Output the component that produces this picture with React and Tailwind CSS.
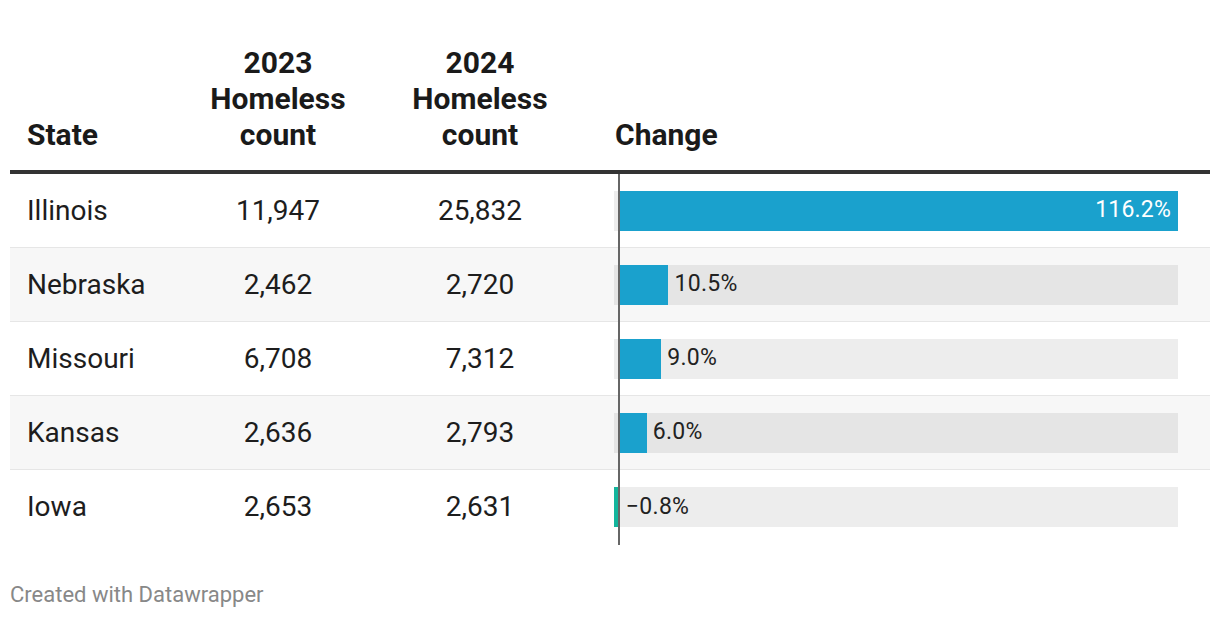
import React from "react";

const ROWS = [
  { state: "Illinois", y2023: "11,947", y2024: "25,832", change: 116.2 },
  { state: "Nebraska", y2023: "2,462", y2024: "2,720", change: 10.5 },
  { state: "Missouri", y2023: "6,708", y2024: "7,312", change: 9.0 },
  { state: "Kansas", y2023: "2,636", y2024: "2,793", change: 6.0 },
  { state: "Iowa", y2023: "2,653", y2024: "2,631", change: -0.8 },
];

// bar scale: domain [-0.8, 116.2] over a 564px track
const MIN = -0.8;
const MAX = 116.2;
const TRACK = 564;
const px = (v) => ((v - MIN) / (MAX - MIN)) * TRACK;
const ZERO = px(0);

const fmt = (v) => (v < 0 ? "\u2212" + Math.abs(v).toFixed(1) : v.toFixed(1)) + "%";

const Bar = ({ value }) => {
  const start = Math.min(px(value), ZERO);
  const width = Math.abs(px(value) - ZERO);
  const inside = value > 100;
  const labelLeft = Math.max(px(value), ZERO + 2) + 6;
  return (
    <div className="relative h-[40px] bg-black/[0.07]">
      <div
        className={`absolute top-0 h-full ${value < 0 ? "bg-[#13b59c]" : "bg-[#1aa1cd]"}`}
        style={{ left: start, width }}
      />
      {inside ? (
        <span className="absolute right-[7px] top-0 h-full flex items-center text-[23px] tracking-[0.2px] text-white">
          {fmt(value)}
        </span>
      ) : (
        <span
          className="absolute top-0 h-full flex items-center text-[23px] tracking-[0.3px] text-[#222]"
          style={{ left: labelLeft }}
        >
          {fmt(value)}
        </span>
      )}
    </div>
  );
};

export default function App() {
  return (
    <div className="w-[1220px] h-[618px] bg-white font-['Roboto',sans-serif] overflow-hidden">
      <div className="mx-[10px]">
        {/* Header */}
        <div className="grid grid-cols-[167px_202px_202px_1fr] items-end pt-[45px] pb-[17px] border-b-4 border-[#333] text-[30px] leading-[36px] font-bold text-[#1a1a1a]">
          <div className="pl-[17px]">State</div>
          <div className="text-center">
            2023
            <br />
            Homeless
            <br />
            count
          </div>
          <div className="text-center">
            2024
            <br />
            Homeless
            <br />
            count
          </div>
          <div className="pl-[34px]">Change</div>
        </div>

        {/* Rows */}
        {ROWS.map((row, i) => (
          <div
            key={row.state}
            className={`grid grid-cols-[167px_202px_202px_1fr] items-center h-[74px] text-[28px] text-[#1d1d1d] ${
              i % 2 === 1 ? "bg-[#f7f7f7]" : "bg-white"
            } ${i < ROWS.length - 1 ? "border-b border-[#e6e6e6]" : ""}`}
          >
            <div className="pl-[17px]">{row.state}</div>
            <div className="text-center">{row.y2023}</div>
            <div className="text-center">{row.y2024}</div>
            <div className="relative h-full flex items-center pl-[33px] pr-[32px]">
              <div className="w-full">
                <Bar value={row.change} />
              </div>
              {/* zero axis */}
              <div
                className="absolute top-0 -bottom-px w-[2px] bg-[#666]"
                style={{ left: 33 + ZERO }}
              />
            </div>
          </div>
        ))}
      </div>

      {/* Footer */}
      <div className="mt-[34px] pl-[10px] text-[22px] text-[#888]">Created with Datawrapper</div>
    </div>
  );
}
